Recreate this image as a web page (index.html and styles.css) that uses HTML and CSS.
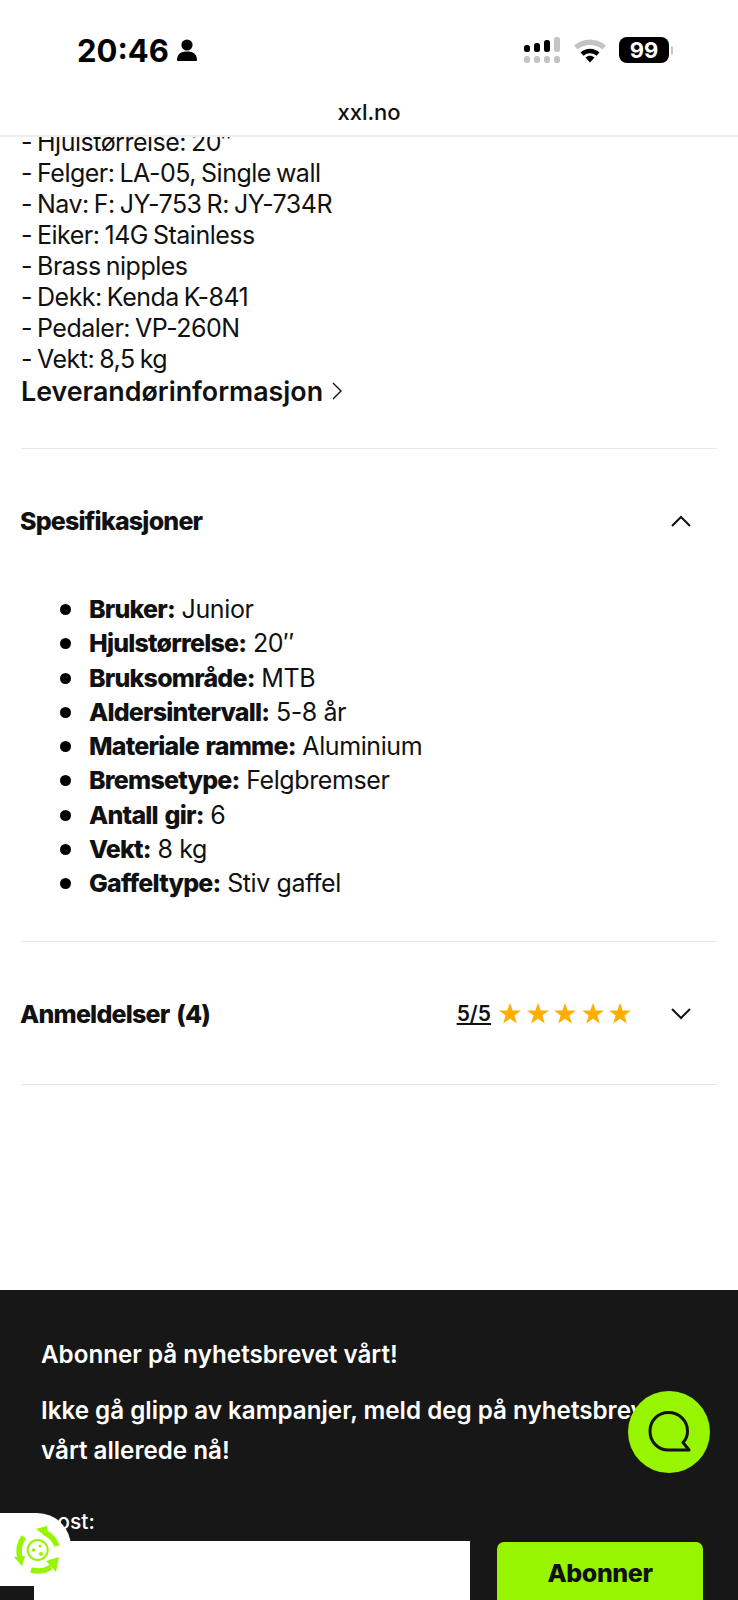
FILE: index.html
```html
<!DOCTYPE html>
<html lang="en">
<head>
    <meta charset="UTF-8">
    <meta name="viewport" content="width=device-width, initial-scale=1.0">
    <title>xxl.no</title>
    <link rel="stylesheet" href="styles.css">
</head>
<body>
    <div class="page">
        <header class="top-bar">
            <div class="status-bar">
                <div class="status-left">
                    <span class="clock">20:46</span>
                    <svg class="person" width="22" height="24" viewBox="0 0 22 24"><circle cx="11" cy="7" r="5.6" fill="#000"/><path d="M1 22c0-6 4-8.500 10-8.500s10 2.500 10 8.500c0 .6-.4 1-1 1H2c-.6 0-1-.4-1-1z" fill="#000"/></svg>
                </div>
                <div class="status-right">
                    <svg width="38" height="28" viewBox="0 0 38 28">
                        <rect x="1" y="9" width="6" height="7" rx="2.500" fill="#000"/>
                        <rect x="11" y="7" width="6" height="9" rx="2.500" fill="#000"/>
                        <rect x="21" y="4" width="6" height="12" rx="2.500" fill="#000"/>
                        <rect x="31" y="1" width="6" height="15" rx="2.500" fill="#c4c4c4"/>
                        <rect x="1" y="20" width="6" height="7" rx="2.500" fill="#c4c4c4"/>
                        <rect x="11" y="20" width="6" height="7" rx="2.500" fill="#c4c4c4"/>
                        <rect x="21" y="20" width="6" height="7" rx="2.500" fill="#c4c4c4"/>
                        <rect x="31" y="20" width="6" height="7" rx="2.500" fill="#c4c4c4"/>
                    </svg>
                    <svg class="wifi" width="34" height="26" viewBox="0 0 34 26">
                        <path d="M1 8.500C10 .5 24 .5 33 8.500l-3.500 4C22.500 6.500 11.500 6.500 4.500 12.500z" fill="#c4c4c4"/>
                        <path d="M7.500 15.500c5.500-5 13.500-5 19 0l-3 3.300c-3.800-3.300-9.200-3.300-13 0z" fill="#000"/>
                        <path d="M12.500 20.500c2.700-2.200 6.300-2.200 9 0L17 25.500z" fill="#000"/>
                    </svg>
                    <div class="battery"><span class="battery-level">99</span><span class="battery-tip"></span></div>
                </div>
            </div>
            <div class="address">xxl.no</div>
        </header>

        <main class="content">
            <div class="description">
                <div>- Hjulstørrelse: 20″</div>
                <div>- Felger: LA-05, Single wall</div>
                <div>- Nav: F: JY-753 R: JY-734R</div>
                <div>- Eiker: 14G Stainless</div>
                <div>- Brass nipples</div>
                <div>- Dekk: Kenda K-841</div>
                <div>- Pedaler: VP-260N</div>
                <div>- Vekt: 8,5 kg</div>
            </div>
            <a class="supplier-link">Leverandørinformasjon
                <svg width="12" height="20" viewBox="0 0 12 20"><path d="M2 2l8 8-8 8" fill="none" stroke="#111" stroke-width="1.400"/></svg>
            </a>

            <section class="accordion accordion-open">
                <div class="accordion-head">
                    <h2>Spesifikasjoner</h2>
                    <svg class="chevron" width="22" height="12" viewBox="0 0 22 12"><path d="M2 11l9-9 9 9" fill="none" stroke="#111" stroke-width="2"/></svg>
                </div>
                <ul class="spec-list">
                    <li><b>Bruker:</b> Junior</li>
                    <li><b>Hjulstørrelse:</b> 20″</li>
                    <li><b>Bruksområde:</b> MTB</li>
                    <li><b>Aldersintervall:</b> 5-8 år</li>
                    <li><b>Materiale ramme:</b> Aluminium</li>
                    <li><b>Bremsetype:</b> Felgbremser</li>
                    <li><b>Antall gir:</b> 6</li>
                    <li><b>Vekt:</b> 8 kg</li>
                    <li><b>Gaffeltype:</b> Stiv gaffel</li>
                </ul>
            </section>

            <section class="accordion accordion-reviews">
                <div class="accordion-head">
                    <h2>Anmeldelser (4)</h2>
                    <div class="rating">
                        <a class="rating-score">5/5</a>
                        <div class="stars">
                            <svg width="22" height="21" viewBox="0 0 24 23"><path class="star" d="M12 0l3 8.300h9l-7.200 5.500 2.700 8.700L12 17.300l-7.500 5.200 2.700-8.700L0 8.300h9z"/></svg>
                            <svg width="22" height="21" viewBox="0 0 24 23"><path class="star" d="M12 0l3 8.300h9l-7.200 5.500 2.700 8.700L12 17.300l-7.500 5.200 2.700-8.700L0 8.300h9z"/></svg>
                            <svg width="22" height="21" viewBox="0 0 24 23"><path class="star" d="M12 0l3 8.300h9l-7.200 5.500 2.700 8.700L12 17.300l-7.500 5.200 2.700-8.700L0 8.300h9z"/></svg>
                            <svg width="22" height="21" viewBox="0 0 24 23"><path class="star" d="M12 0l3 8.300h9l-7.200 5.500 2.700 8.700L12 17.300l-7.500 5.200 2.700-8.700L0 8.300h9z"/></svg>
                            <svg width="22" height="21" viewBox="0 0 24 23"><path class="star" d="M12 0l3 8.300h9l-7.200 5.500 2.700 8.700L12 17.300l-7.500 5.200 2.700-8.700L0 8.300h9z"/></svg>
                        </div>
                    </div>
                    <svg class="chevron" width="22" height="12" viewBox="0 0 22 12"><path d="M2 1l9 9 9-9" fill="none" stroke="#111" stroke-width="2"/></svg>
                </div>
            </section>
        </main>

        <footer class="newsletter">
            <p class="newsletter-title">Abonner på nyhetsbrevet vårt!</p>
            <p class="newsletter-text">Ikke gå glipp av kampanjer, meld deg på nyhetsbrevet vårt allerede nå!</p>
            <label class="email-label">E-post:</label>
            <div class="newsletter-form">
                <div class="email-input"></div>
                <button class="subscribe">Abonner</button>
            </div>
        </footer>

        <div class="chat-button">
            <svg width="48" height="48" viewBox="0 0 48 48"><path d="M23.500 4.500C13 4.500 5 12.500 5 23.200S13 42 23.500 42H44l-6-7.500c3-3 4.500-7 4.500-11.300C42.500 12.500 34 4.500 23.500 4.500z" fill="none" stroke="#111" stroke-width="3" stroke-linejoin="round"/></svg>
        </div>

        <div class="eco-badge">
            <svg width="50" height="50" viewBox="0 0 50 50">
                <g fill="none" stroke="#97f500" stroke-width="5.500">
                    <path d="M32 7c6 3 11 8 13 14"/>
                    <path d="M12 12C7 18 6 25 8 33"/>
                    <path d="M19 45c7 2 14 1 20-3"/>
                </g>
                <g fill="#97f500">
                    <path d="M24 4l11-3 1 12z"/>
                    <path d="M2 32l11-1-3 10z"/>
                    <path d="M34 36l13-4-3 15z"/>
                </g>
                <circle cx="25.700" cy="25" r="10" fill="none" stroke="#97f500" stroke-width="2"/>
                <circle cx="21.500" cy="25" r="1.800" fill="#97f500"/>
                <circle cx="28" cy="21" r="1.500" fill="#97f500"/>
                <circle cx="29" cy="29" r="2" fill="#97f500"/>
            </svg>
        </div>
        <div class="corner-block"></div>
    </div>
</body>
</html>
```

FILE: styles.css
```css
* {
    box-sizing: border-box;
}
html, body {
    margin: 0;
    padding: 0;
}
body {
    font-family: Inter, Arial, sans-serif;
    color: #111;
    background: white;
}
.page {
    position: relative;
    width: 738px;
    height: 1600px;
    overflow: hidden;
}

/* browser chrome */
.top-bar {
    position: relative;
    z-index: 2;
    height: 137px;
    background: white;
    border-bottom: 2px solid #eee;
}
.status-bar {
    display: flex;
    justify-content: space-between;
    align-items: center;
    height: 100px;
    padding: 0 65px 0 77px;
}
.status-left {
    display: flex;
    align-items: center;
    gap: 7px;
}
.clock {
    font-size: 31px;
    font-weight: 700;
    color: #000;
}
.status-right {
    display: flex;
    align-items: center;
    gap: 12px;
}
.battery {
    display: flex;
    align-items: center;
    gap: 2px;
}
.battery-level {
    width: 50px;
    height: 26px;
    border-radius: 8px;
    background: black;
    color: white;
    font-size: 22px;
    font-weight: 700;
    line-height: 26px;
    text-align: center;
}
.battery-tip {
    width: 2px;
    height: 9px;
    background: #c4c4c4;
    border-radius: 0 2px 2px 0;
}
.address {
    font-size: 22px;
    font-weight: 500;
    text-align: center;
    line-height: 26px;
    margin-top: -1px;
}

/* product text */
.content {
    margin-top: -10px;
    padding: 0 21px;
}
.description {
    font-size: 25px;
    line-height: 31px;
    letter-spacing: -0.5px;
    word-spacing: -1.5px;
}
.supplier-link {
    display: flex;
    align-items: center;
    gap: 8px;
    font-size: 26.800px;
    font-weight: 600;
    line-height: 32px;
}
.accordion {
    border-top: 1px solid #e8e8e8;
}
.accordion-open {
    margin-top: 41px;
}
.accordion-head {
    display: flex;
    align-items: center;
    padding-right: 25px;
}
.accordion-head h2 {
    margin: 0 0 0 -1px;
    flex-grow: 1;
    font-size: 25px;
    font-weight: 800;
    letter-spacing: -0.8px;
}
.accordion-reviews h2 {
    word-spacing: 2px;
}
.accordion-open .accordion-head {
    height: 143px;
}
.accordion-reviews .accordion-head {
    height: 142px;
    padding-top: 2px;
}
.spec-list {
    margin: 0;
    padding: 0 0 40px 68px;
    list-style: none;
    font-size: 25px;
    line-height: 34.300px;
    letter-spacing: -0.4px;
}
.spec-list li::before {
    content: "";
    display: inline-block;
    width: 11px;
    height: 11px;
    margin: 0 18px 0 -29px;
    border-radius: 50%;
    background: black;
    vertical-align: 3px;
}
.spec-list b {
    font-weight: 800;
    letter-spacing: -0.8px;
    word-spacing: 2px;
}
.accordion:last-child {
    border-bottom: 1px solid #e8e8e8;
}
.rating {
    display: flex;
    align-items: center;
    gap: 8px;
    margin-right: 39px;
}
.rating-score {
    font-size: 21px;
    font-weight: 600;
    text-decoration: underline;
}
.stars {
    display: flex;
    gap: 5.500px;
}
.star {
    fill: #ffae00;
}

/* newsletter */
.newsletter {
    margin-top: 205px;
    height: 400px;
    padding: 45px 41px 0;
    background: #171717;
    color: white;
}
.newsletter p {
    margin: 0;
    font-size: 24.200px;
    font-weight: 600;
    line-height: 40px;
}
.newsletter .newsletter-title {
    margin-bottom: 16px;
}
.newsletter-text {
    width: 640px;
}
.email-label {
    display: block;
    margin: 36px 0 0 -19px;
    font-size: 21px;
    font-weight: 500;
    line-height: 30px;
}
.newsletter-form {
    display: flex;
    width: 690px;
    margin: 4px 0 0 -7px;
    gap: 27px;
    align-items: flex-start;
}
.email-input {
    flex: none;
    width: 436px;
    height: 80px;
    background: white;
}
.subscribe {
    flex: none;
    width: 206px;
    height: 80px;
    margin-top: 1px;
    border: none;
    border-radius: 7px;
    background: #97f500;
    color: #111;
    font-family: Inter, sans-serif;
    font-size: 25px;
    font-weight: 800;
    letter-spacing: -0.4px;
    padding-bottom: 18px;
}

/* things floating on top */
.chat-button {
    position: absolute;
    left: 628px;
    top: 1391px;
    width: 82px;
    height: 82px;
    border-radius: 50%;
    background: #97f500;
    display: flex;
    align-items: center;
    justify-content: center;
}
.eco-badge {
    position: absolute;
    left: -10px;
    top: 1513px;
    width: 81px;
    height: 100px;
    background: white;
    border-radius: 0 34px 34px 0;
    display: flex;
    align-items: center;
    justify-content: center;
    padding: 0 0 26px 12px;
}
.corner-block {
    position: absolute;
    left: 0;
    top: 1586px;
    width: 34px;
    height: 14px;
    background: #171717;
}
```
